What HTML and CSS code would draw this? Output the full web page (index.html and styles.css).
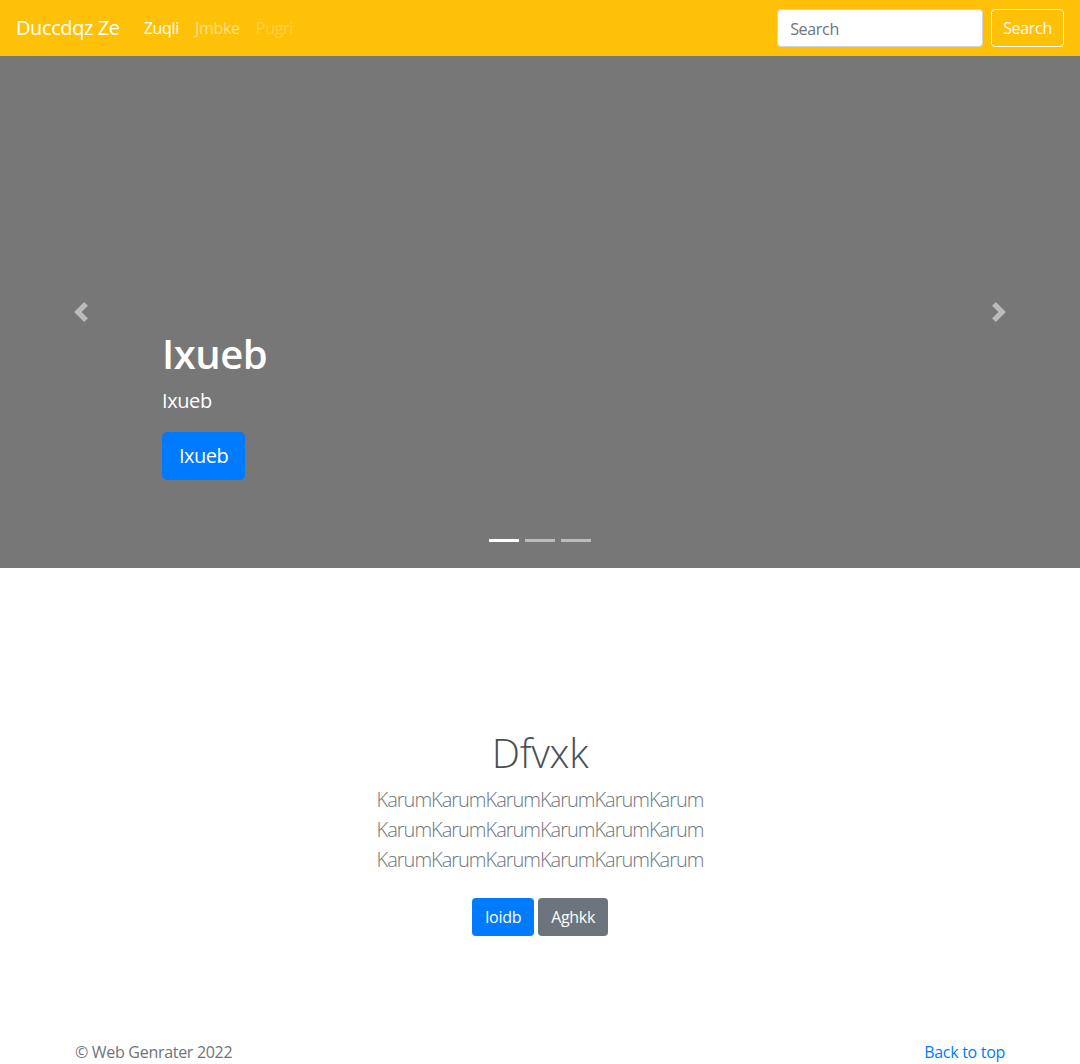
FILE: index.html
```
<!DOCTYPE html>
<html lang="en">
<head>
<meta charset="utf-8">
<title>Duccdqz Ze</title>
<link rel="stylesheet" href="styles.css">
</head>
<body>
<header class="navbar">
  <a class="brand" href="#">Duccdqz Ze</a>
  <nav class="nav">
    <a class="nav-link active" href="#">Zuqli</a>
    <a class="nav-link" href="#">Jmbke</a>
    <a class="nav-link disabled" href="#">Pugri</a>
  </nav>
  <form class="search">
    <input class="search-input" type="text" placeholder="Search">
    <button class="btn-outline-light" type="button">Search</button>
  </form>
</header>

<main>
  <section class="carousel">
    <div class="carousel-item"></div>
    <a class="control control-prev" href="#">
      <svg class="control-icon" viewBox="0 0 8 8" width="20" height="20"><path d="M5.25 0l-4 4 4 4 1.5-1.5L4.25 4l2.5-2.5L5.25 0z"/></svg>
    </a>
    <a class="control control-next" href="#">
      <svg class="control-icon" viewBox="0 0 8 8" width="20" height="20"><path d="M2.75 0l-1.5 1.5L3.75 4l-2.5 2.5L2.75 8l4-4-4-4z"/></svg>
    </a>
    <div class="caption">
      <h1 class="caption-title">Ixueb</h1>
      <p class="caption-text">Ixueb</p>
      <a class="btn-lg btn-primary" href="#">Ixueb</a>
    </div>
    <ol class="indicators">
      <li class="indicator active"></li>
      <li class="indicator"></li>
      <li class="indicator"></li>
    </ol>
  </section>

  <section class="intro">
    <h1 class="intro-title">Dfvxk</h1>
    <p class="lead">KarumKarumKarumKarumKarumKarum KarumKarumKarumKarumKarumKarum KarumKarumKarumKarumKarumKarum</p>
    <p class="actions">
      <a class="btn btn-primary" href="#">Ioidb</a>
      <a class="btn btn-secondary" href="#">Aghkk</a>
    </p>
  </section>
</main>

<footer class="footer">
  <div class="footer-inner">
    <p class="copy">© Web Genrater 2022</p>
    <a class="back" href="#">Back to top</a>
  </div>
</footer>
</body>
</html>
```

FILE: styles.css
```
* { box-sizing: border-box; }

html, body {
  margin: 0;
  padding: 0;
}

body {
  font-family: "Open Sans", "Noto Sans", sans-serif;
  font-size: 16px;
  line-height: 1.5;
  color: #212529;
  background: #fff;
}

a { text-decoration: none; }

/* Navbar */
.navbar {
  height: 56px;
  background: #ffc107;
  display: flex;
  align-items: center;
  padding: 0 16px;
}

.brand {
  color: #fff;
  font-size: 20px;
  line-height: 30px;
  margin-right: 16px;
  letter-spacing: -0.4px;
}

.nav {
  display: flex;
  flex: 1;
}

.nav-link {
  padding: 8px;
  color: rgba(255, 255, 255, 0.5);
  font-size: 16px;
  line-height: 24px;
  letter-spacing: -0.3px;
}
.nav-link.active { color: #fff; }
.nav-link.disabled { color: rgba(255, 255, 255, 0.25); }

.search {
  display: flex;
  align-items: center;
  gap: 8px;
}

.search-input {
  width: 206px;
  height: 38px;
  padding: 7px 12px 5px;
  font-family: inherit;
  font-size: 16px;
  line-height: 24px;
  color: #495057;
  background: #fff;
  border: 1px solid #ced4da;
  border-radius: 4px;
  letter-spacing: -0.3px;
}
.search-input::placeholder { color: #6c757d; }

.btn-outline-light {
  height: 38px;
  padding: 6px 11px;
  font-family: inherit;
  font-size: 16px;
  line-height: 24px;
  color: #f8f9fa;
  background: transparent;
  border: 1px solid #f8f9fa;
  border-radius: 4px;
  letter-spacing: -0.3px;
}

/* Carousel */
.carousel {
  position: relative;
  height: 512px;
  background: #777;
  margin-bottom: 64px;
}

.carousel-item {
  height: 100%;
}

.control {
  position: absolute;
  top: 0;
  bottom: 0;
  width: 15%;
  display: flex;
  align-items: center;
  justify-content: center;
  opacity: 0.5;
}
.control-prev { left: 0; }
.control-next { right: 0; }
.control-icon { fill: #fff; display: block; }

.caption {
  position: absolute;
  left: 15%;
  right: 15%;
  bottom: 68px;
  padding: 20px 0;
  color: #fff;
  text-align: left;
}

.caption-title {
  margin: 0 0 8px;
  font-size: 40px;
  line-height: 48px;
  font-weight: 600;
  letter-spacing: -0.5px;
}

.caption-text {
  margin: 0 0 16px;
  font-size: 20px;
  line-height: 30px;
  letter-spacing: -0.4px;
}

.btn-lg {
  display: inline-block;
  padding: 8px 16px;
  font-size: 20px;
  line-height: 30px;
  border: 1px solid transparent;
  border-radius: 5px;
  letter-spacing: -0.5px;
}

.btn-primary {
  color: #fff;
  background: #007bff;
  border-color: #007bff;
}

.btn-secondary {
  color: #fff;
  background: #6c757d;
  border-color: #6c757d;
}

.indicators {
  position: absolute;
  left: 0;
  right: 0;
  bottom: 26px;
  margin: 0;
  padding: 0;
  list-style: none;
  display: flex;
  justify-content: center;
  gap: 6px;
}

.indicator {
  width: 30px;
  height: 3px;
  background: #fff;
  opacity: 0.5;
}
.indicator.active { opacity: 1; }

/* Intro */
.intro {
  padding: 97px 0 32px;
  text-align: center;
}

.intro-title {
  margin: 0 0 8px;
  font-size: 40px;
  line-height: 48px;
  font-weight: 300;
  color: #4a4f55;
  letter-spacing: -0.3px;
}

.lead {
  width: 450px;
  margin: 0 auto 15px;
  font-size: 20px;
  line-height: 30px;
  font-weight: 300;
  color: #6c757d;
  letter-spacing: -1px;
}

.actions {
  margin: 0 0 16px;
  display: flex;
  justify-content: center;
  gap: 4px;
}

.btn {
  display: inline-block;
  margin: 8px 0;
  padding: 6px 12px;
  font-size: 16px;
  line-height: 24px;
  border: 1px solid transparent;
  border-radius: 4px;
  letter-spacing: -0.3px;
}

/* Footer */
.footer {
  padding: 48px 0;
  color: #6c757d;
}

.footer-inner {
  width: 960px;
  margin: 0 auto;
  padding: 0 15px;
  display: flex;
  justify-content: space-between;
  align-items: baseline;
}

.copy {
  margin: 0;
  letter-spacing: -0.3px;
}

.back {
  color: #007bff;
  letter-spacing: -0.3px;
}
```
